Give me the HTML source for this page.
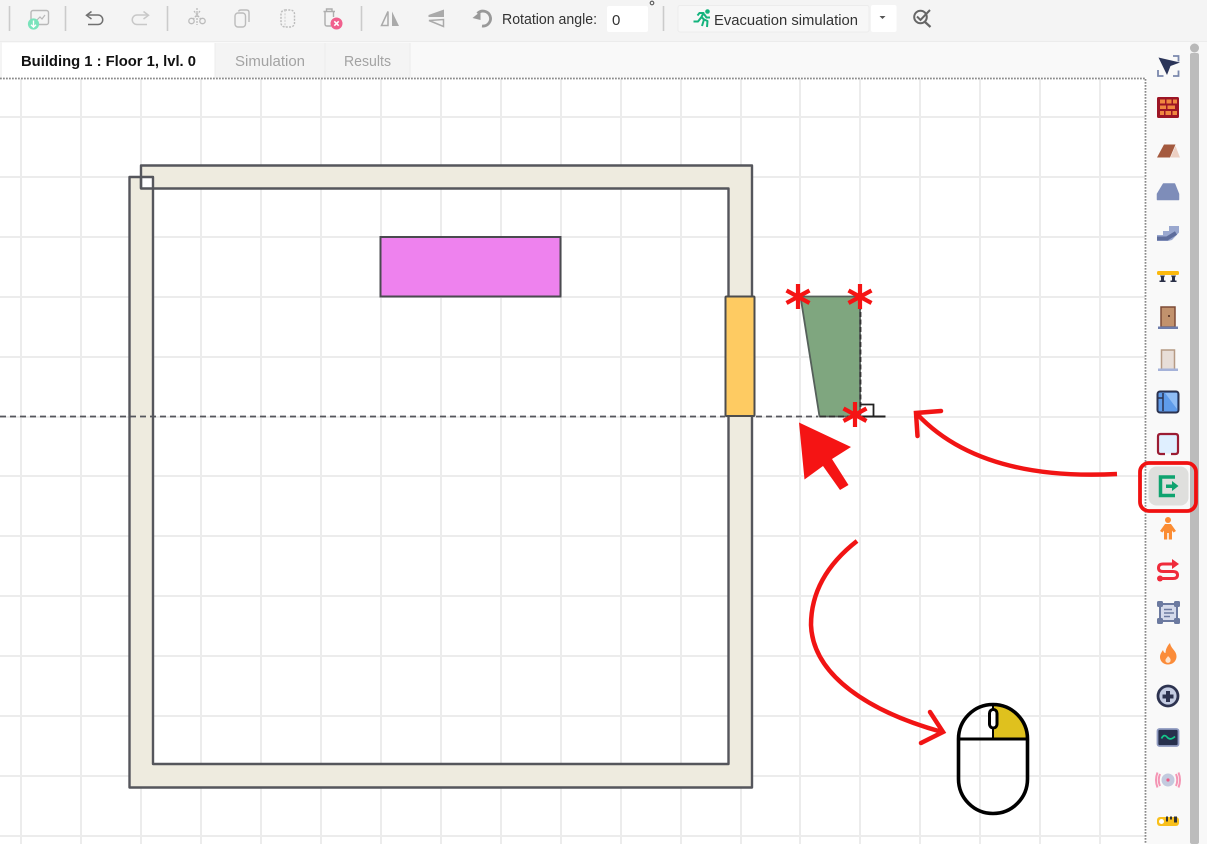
<!DOCTYPE html>
<html><head><meta charset="utf-8"><style>
html,body{margin:0;padding:0;width:1207px;height:844px;overflow:hidden;background:#fff}
svg{display:block;filter:blur(0.35px)}
text{font-family:"Liberation Sans",sans-serif}
</style></head><body>
<svg width="1207" height="844" viewBox="0 0 1207 844" xmlns="http://www.w3.org/2000/svg">
<!-- canvas grid -->
<rect x="0" y="0" width="1207" height="844" fill="#fff"/>
<g stroke="#ececec" stroke-width="2" fill="none">
<path d="M21 79V844M81 79V844M141 79V844M201 79V844M261 79V844M321 79V844M381 79V844M441 79V844M501 79V844M561 79V844M621 79V844M681 79V844M741 79V844M800 79V844M860 79V844M920 79V844M980 79V844M1040 79V844M1100 79V844"/>
<path d="M0 117H1145M0 177H1145M0 237H1145M0 297H1145M0 357H1145M0 417H1145M0 476H1145M0 536H1145M0 596H1145M0 656H1145M0 716H1145M0 776H1145M0 836H1145"/>
</g>
<!-- toolbar -->
<rect x="0" y="0" width="1207" height="41" fill="#f4f4f4"/>
<rect x="0" y="41" width="1207" height="1" fill="#ececec"/>
<rect x="0" y="42" width="1207" height="36" fill="#f9f9f9"/>
<rect x="0" y="42" width="2" height="36" fill="#f4f4f4"/>
<rect x="2" y="43" width="213" height="35" fill="#fff"/>
<rect x="215" y="43" width="110" height="35" fill="#f4f4f4"/>
<rect x="325" y="43" width="85" height="35" fill="#f4f4f4"/>
<path d="M215 43V78M325 43V78M410 43V78" stroke="#ececec"/>
<text x="21" y="66" font-size="15" font-weight="700" fill="#111" textLength="175" lengthAdjust="spacingAndGlyphs">Building 1 : Floor 1, lvl. 0</text>
<text x="235" y="66" font-size="15" fill="#a3a3a3" textLength="70" lengthAdjust="spacingAndGlyphs">Simulation</text>
<text x="344" y="66" font-size="15" fill="#a3a3a3" textLength="47" lengthAdjust="spacingAndGlyphs">Results</text>
<!-- dotted borders -->
<path d="M0 78.500H1145.500V844" stroke="#8a8a8a" stroke-width="1.800" stroke-dasharray="1.800 1.200" fill="none"/>
<!-- toolbar separators -->
<path d="M9.500 6V31M65.500 6V31M167.500 6V31M361.500 6V31M663.500 6V31" stroke="#cbcbcb" stroke-width="1.600"/>
<!-- save icon -->
<rect x="31" y="10.500" width="17.500" height="14" rx="2" fill="none" stroke="#b8b8b8" stroke-width="1.400"/>
<path d="M36 21l4-4 2 2 3-4" fill="none" stroke="#b8b8b8" stroke-width="1.200"/>
<circle cx="33.500" cy="24" r="5.600" fill="#7ae3bb"/>
<path d="M33.500 20.500V27M31 24.800L33.500 27.200 36 24.800" stroke="#fff" stroke-width="1.400" fill="none"/>
<!-- undo / redo -->
<path d="M87 15H98a4.600 4.600 0 0 1 0 9.500H88" fill="none" stroke="#707070" stroke-width="1.500"/>
<path d="M91.500 11.500L86.500 15.300 91.500 19" fill="none" stroke="#707070" stroke-width="1.500"/>
<path d="M148 15H137a4.600 4.600 0 0 0 0 9.500H147" fill="none" stroke="#c8c8c8" stroke-width="1.500"/>
<path d="M143.500 11.500L148.500 15.300 143.500 19" fill="none" stroke="#c8c8c8" stroke-width="1.500"/>
<!-- cut -->
<g fill="none" stroke="#bbb" stroke-width="1.300"><circle cx="191.500" cy="21" r="2.700"/><circle cx="202.500" cy="21" r="2.700"/><path d="M197 8V13M193 19.500L200 11M201 19.500L194 11M197 15V25" stroke-dasharray="2 1"/></g>
<!-- copy -->
<rect x="235" y="13" width="10.500" height="14" rx="3" fill="none" stroke="#bcbcbc" stroke-width="1.400"/>
<path d="M238.500 11.500Q239 10 241 10H246.500Q249 10 249 12.500V22" fill="none" stroke="#bcbcbc" stroke-width="1.400"/>
<!-- paste -->
<rect x="281" y="10" width="13.500" height="17" rx="4" fill="none" stroke="#bcbcbc" stroke-width="1.400" stroke-dasharray="2 1.300"/>
<path d="M285 10V27" stroke="#ccc" stroke-width="1" stroke-dasharray="2 1.300"/>
<!-- delete -->
<path d="M323.500 11.500H335M326.500 11.500V9H332V11.500M325 12V24Q325 26 327 26H331" fill="none" stroke="#adadad" stroke-width="1.400"/>
<path d="M333.500 12V17" stroke="#adadad" stroke-width="1.400"/>
<circle cx="336.500" cy="23.500" r="6" fill="#f0608d"/>
<path d="M334.300 21.300L338.700 25.700M338.700 21.300L334.300 25.700" stroke="#fff" stroke-width="1.500"/>
<!-- flip h / v -->
<path d="M388 11.500V25.500H381.500Z" fill="none" stroke="#aaa" stroke-width="1.500"/>
<path d="M392 11.500V26H399Z" fill="#aaa"/>
<path d="M444 9.500V17H428.500V15Z" fill="#aaa"/>
<path d="M443.500 19.500V26.500L429 20.500Z" fill="none" stroke="#aaa" stroke-width="1.500"/>
<!-- rotate -->
<path d="M477.500 13.500A7.500 7.500 0 1 1 482 26" fill="none" stroke="#999" stroke-width="2.800"/>
<path d="M472.500 18L480.500 11.500V20Z" fill="#999"/>
<text x="502" y="24" font-size="14.500" fill="#333" textLength="95" lengthAdjust="spacingAndGlyphs">Rotation angle:</text>
<rect x="607" y="6" width="41" height="26" rx="2" fill="#fff"/>
<text x="612" y="25" font-size="15" fill="#333">0</text>
<circle cx="652" cy="3" r="1.800" fill="none" stroke="#555" stroke-width="1.100"/>
<!-- evac button -->
<rect x="678" y="5.500" width="191" height="26.500" rx="2" fill="#f7f7f7" stroke="#ececec"/>
<rect x="871" y="5" width="25.500" height="27" rx="2" fill="#fff"/>
<path d="M879.500 16H885.500L882.500 19Z" fill="#555"/>
<circle cx="707.500" cy="11.500" r="2.300" fill="#14b37d"/>
<path d="M693.500 21.500H698L701.500 17 704 19.500 702 26M701.500 17L703.500 13H699.500L697.500 15.500M704 14L706.500 17.500H710M703 19L707.500 21 707 27" fill="none" stroke="#14b37d" stroke-width="2" stroke-linejoin="round"/>
<text x="714" y="25" font-size="15" fill="#333" textLength="144" lengthAdjust="spacingAndGlyphs">Evacuation simulation</text>
<!-- search-check -->
<circle cx="920.500" cy="17" r="6.300" fill="none" stroke="#666" stroke-width="2"/>
<path d="M925 22L930.500 27" stroke="#666" stroke-width="2.200"/>
<path d="M917 16.500L920.500 20 930 10" fill="none" stroke="#666" stroke-width="2"/>
<!-- right panel -->
<rect x="1147" y="42" width="43" height="802" fill="#f9f9f9"/>
<rect x="1190" y="42" width="9" height="11" fill="#f4f4f4"/>
<circle cx="1194.500" cy="48" r="4.500" fill="#b8b8b8"/>
<rect x="1190" y="53" width="9" height="791" rx="2" fill="#bcbcbc"/>
<rect x="1199" y="42" width="8" height="802" fill="#f8f8f8"/>
<!-- panel icons -->
<path d="M1158.500 57.500L1180 62.500 1170.500 66 1167 75Z" fill="#2b3559"/>
<g fill="none" stroke="#7b88ad" stroke-width="1.800"><path d="M1173 56H1178.500V61.500M1158 70V76H1163.500M1173 76H1178.500V70.500"/></g>
<rect x="1157" y="97" width="22" height="21" rx="1.500" fill="#9c1525"/>
<path d="M1166.500 99.500h5v4h-5zM1173 99.500h4v4h-4zM1160 105.500h6v3.500h-6zM1167.500 105.500h7.500v3.500h-7.500zM1160 111h4v4h-4zM1165.500 111h5.500v4h-5.500zM1172.500 111h4.500v4h-4.500zM1160 99.500h5v4h-5z" fill="#f0873f"/>
<path d="M1157 157.500L1164 144.500H1175.500L1170 157.500Z" fill="#a45a3f"/>
<path d="M1170.500 157.500L1175.500 146 1180 157.500Z" fill="#eccfc2"/>
<path d="M1163.500 184H1174.500L1178.500 194V199.500H1157.500V194Z" fill="#7e8db9" stroke="#7e8db9" stroke-linejoin="round" stroke-width="1.500"/>
<path d="M1157 241V235H1163V231H1169V226H1179V232.500L1172 240 1168 241Z" fill="#9aa8cf"/>
<path d="M1157 238.500H1167L1176 233" fill="none" stroke="#5e6d9c" stroke-width="4"/>
<rect x="1157" y="271" width="22" height="4" rx="1.500" fill="#fbb90e"/>
<path d="M1160 275.500h5l-1 2v3h1.500v1.500h-6v-1.500h1.500v-3zM1171 275.500h5l-1 2v3h1.500v1.500h-6v-1.500h1.500v-3z" fill="#2a3048"/>
<rect x="1161" y="307" width="14" height="20" fill="#c2926d" stroke="#7d4a36" stroke-width="1.500"/>
<circle cx="1169" cy="316" r="1" fill="#4a2a20"/>
<rect x="1158" y="326.500" width="20" height="2.500" fill="#6d7cab"/>
<rect x="1161.500" y="350" width="13" height="19.500" fill="#e8ded8" stroke="#b69a84" stroke-width="1.500"/>
<rect x="1158" y="368.500" width="20" height="2.500" fill="#a5b2d9"/>
<rect x="1157.500" y="391.500" width="21" height="21" rx="2.500" fill="#5f9bea" stroke="#2c3350" stroke-width="2"/>
<path d="M1163 393V411M1158 398H1163" stroke="#2c3350" stroke-width="1.500"/>
<path d="M1165 393H1177V409Z" fill="#8fbcf5"/>
<rect x="1158" y="433.500" width="20" height="20" rx="2.500" fill="#dfefff"/>
<path d="M1165 454H1160.500Q1158 454 1158 451.500V436.500Q1158 434 1160.500 434H1175.500Q1178 434 1178 436.500V451.500Q1178 454 1175.500 454H1171" fill="none" stroke="#9b1c33" stroke-width="2.200"/>
<!-- exit selected -->
<rect x="1140" y="463" width="56" height="48" rx="9" fill="none" stroke="#f01111" stroke-width="3.800"/>
<rect x="1148.500" y="466.500" width="40" height="39" rx="8" fill="#dfdfdd"/>
<path d="M1175 477H1160.500V495.500H1175" fill="none" stroke="#0fa36f" stroke-width="3.500"/>
<path d="M1166 484.500H1172V481L1178.500 486 1172 491V488H1166Z" fill="#0fa36f"/>
<!-- person -->
<circle cx="1168" cy="520" r="3" fill="#fb8c33"/>
<path d="M1160 531L1165 524H1171L1176 531 1173.500 532.500 1172 530.500V539.500H1168.800V533H1167.200V539.500H1164V530.500L1162.500 532.500Z" fill="#fb8c33"/>
<!-- route -->
<g fill="none" stroke="#ef2b3b" stroke-width="3" stroke-linecap="round"><path d="M1174 564H1163Q1158.500 564 1158.500 568 1158.500 571.500 1163 571.500H1173Q1177.500 571.500 1177.500 575 1177.500 578.500 1173 578.500H1161"/></g>
<path d="M1172 559L1179 564 1172 569Z" fill="#ef2b3b"/>
<circle cx="1160" cy="578.500" r="3" fill="#ef2b3b"/>
<!-- zone -->
<rect x="1160" y="604" width="17" height="17" fill="#d6dbeb" stroke="#6c7aa0" stroke-width="2"/>
<path d="M1164 609.500H1172M1164 613H1174M1164 616.500H1170" stroke="#6c7aa0" stroke-width="1.400"/>
<g fill="#6c7aa0"><rect x="1157" y="601" width="6" height="6" rx="1.500"/><rect x="1174" y="601" width="6" height="6" rx="1.500"/><rect x="1157" y="618" width="6" height="6" rx="1.500"/><rect x="1174" y="618" width="6" height="6" rx="1.500"/></g>
<!-- fire -->
<path d="M1170 643C1171 649 1177 651 1176.500 657 1176 662 1172 664.500 1168 664.500 1163 664.500 1160 661 1160 657 1160 654 1162 651.500 1163 650 1163.500 652 1164.500 653 1165.500 653 1165.500 650 1167 646 1170 643Z" fill="#fb8c3a"/>
<path d="M1168 656C1170 658 1171 659 1170.500 661 1170 663.500 1166 663.500 1165.500 661 1165 659 1167 658 1168 656Z" fill="#fde4cf"/>
<!-- pinwheel circle -->
<circle cx="1168" cy="696" r="10" fill="#c4cce2" stroke="#2d3350" stroke-width="2.800"/>
<path d="M1162.500 696.500H1173.500M1168 691V702" stroke="#2d3350" stroke-width="4"/>
<!-- monitor -->
<rect x="1157.500" y="729" width="21" height="17" rx="2" fill="#27304d" stroke="#8f9ac0" stroke-width="1.800"/>
<path d="M1161.500 738.500Q1164 733.500 1167 737 1170 741 1175 736.500" fill="none" stroke="#14c98b" stroke-width="1.700"/>
<!-- sensor -->
<circle cx="1168" cy="780" r="6.500" fill="#c3cade"/>
<circle cx="1168" cy="780" r="1.600" fill="#ef5a86"/>
<path d="M1160 774Q1157.500 780 1160 786M1157.500 772.500Q1154.500 780 1157.500 787.500M1176 774Q1178.500 780 1176 786M1178.500 772.500Q1181.500 780 1178.500 787.500" fill="none" stroke="#f495b4" stroke-width="2"/>
<!-- tape -->
<rect x="1157" y="817" width="22" height="9" rx="3" fill="#f9c01c"/>
<circle cx="1161.500" cy="821.500" r="2.500" fill="#fff"/>
<path d="M1166 816.500h2v5h-2zM1170 816.500h2v3h-2zM1174 816.500h3v6h-3z" fill="#333"/>
<!-- WALLS -->
<g stroke="#55565c" stroke-width="2.400" stroke-linejoin="round">
<path fill-rule="evenodd" d="M141 165.500H752V787.500H129.500V177H153V764H728.500V188.500H141Z" fill="#eeebdf"/>
<rect x="129.500" y="177" width="23.500" height="11.500" fill="none" stroke-width="0"/>
<path d="M141 177V188.500" fill="none"/>
</g>
<rect x="380.500" y="237" width="180" height="59.500" fill="#ee82ee" stroke="#4a4a4f" stroke-width="2"/>
<rect x="725.500" y="296.500" width="29" height="119.500" rx="1" fill="#fecb62" stroke="#4d4d4d" stroke-width="2"/>
<!-- dashed line -->
<path d="M0 416.500H725M756 416.500H818" stroke="#55565c" stroke-width="1.800" stroke-dasharray="6 4" fill="none"/>
<!-- exit polygon -->
<path d="M800.500 296.500H860V416.500H819.500Z" fill="#7fa67f" stroke="#55605a" stroke-width="1.800"/>
<path d="M860.500 297V416.500" stroke="#333" stroke-width="1.800" stroke-dasharray="5 2.500"/>
<path d="M860 416.500H885.500" stroke="#222" stroke-width="2"/>
<path d="M860 404.500H873.500V416.500" fill="none" stroke="#222" stroke-width="1.800"/>
<path d="M820 416.500H860" stroke="#333" stroke-width="1.800" stroke-dasharray="6 3"/>
<!-- asterisks -->
<g stroke="#f51414" stroke-width="4.200" fill="none">
<path d="M798 284V309M786.500 290.500L809.500 303M786.500 303L809.500 290.500"/>
<path d="M860 284V309M848.500 290.500L871.500 303M848.500 303L871.500 290.500"/>
<path d="M855 402V427M843.500 408.500L866.500 421M843.500 421L866.500 408.500"/>
</g>
<!-- big cursor -->
<path d="M799 422.500L851 447 832 459 848.500 485 840 490 823 466 804.500 479.500Z" fill="#f51414"/>
<!-- arrows -->
<g stroke="#f11414" stroke-width="4.500" fill="none" stroke-linecap="round">
<path d="M1117 474C1040 478 965 465 917 414" stroke-linecap="butt"/>
<path d="M941 411L916 413 917.500 436"/>
<path d="M857 541C825 566 811 594 811 625 813 676 870 712 942 732" stroke-linecap="butt"/>
<path d="M930 712L943 732 921 743"/>
</g>
<!-- mouse -->
<path d="M993 704A35 35 0 0 1 1028 738.500V739H993Z" fill="#dfc11e"/>
<rect x="958.500" y="704.500" width="69" height="109" rx="34.500" fill="none" stroke="#000" stroke-width="3.600"/>
<path d="M958 739H1028" stroke="#000" stroke-width="3"/>
<path d="M993 704V739" stroke="#000" stroke-width="2"/>
<rect x="989.500" y="709.500" width="7.500" height="18.500" rx="3.700" fill="#fff" stroke="#000" stroke-width="3"/>
</svg>
</body></html>
